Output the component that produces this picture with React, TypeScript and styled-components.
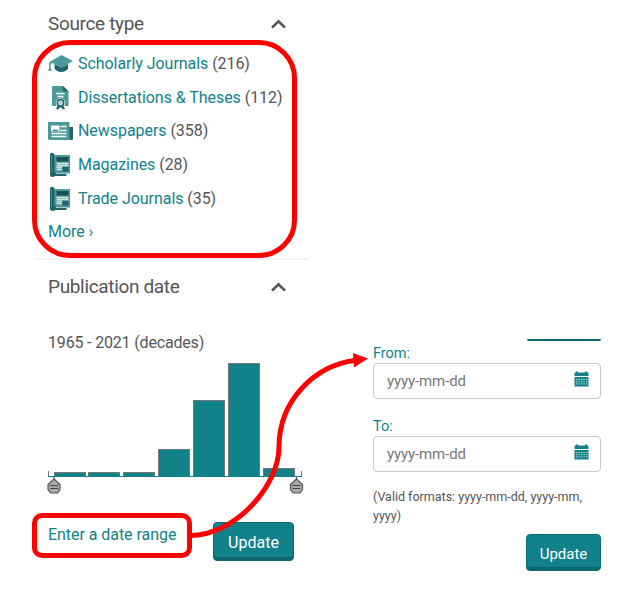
import React from "react";
import styled, { createGlobalStyle } from "styled-components";

const TEAL = "#12828a";

const GlobalStyle = createGlobalStyle`
  * { box-sizing: border-box; }
  body { margin: 0; background: #fff; font-family: Roboto, "Liberation Sans", sans-serif; color: #555; }
`;

const Page = styled.main`
  position: relative;
  display: flex;
  gap: 64px;
  width: 632px;
  height: 594px;
  padding-left: 34px;
  overflow: hidden;
`;
const Facets = styled.aside`
  width: 275px;
`;
const Section = styled.section<{ $divided?: boolean }>`
  padding: 0 0 0 14px;
  height: ${(p) => (p.$divided ? 260 : 334)}px;
  border-bottom: ${(p) => (p.$divided ? "2px solid #f3f3f3" : "0")};
`;
const SectionHeader = styled.header<{ $height: number }>`
  display: flex;
  align-items: center;
  justify-content: space-between;
  height: ${(p) => p.$height}px;
  padding-right: 22px;
`;
const Title = styled.h2`
  margin: 0;
  font-size: 19px;
  line-height: 24px;
  font-weight: 400;
  letter-spacing: -0.34px;
`;
const SourceList = styled.ul`
  list-style: none;
  margin: 0;
  padding: 0;
`;
const SourceItem = styled.li`
  display: grid;
  grid-template-columns: 30px 1fr;
  align-items: center;
  height: 33.7px;
  font-size: 16px;
  letter-spacing: -0.07px;
  white-space: nowrap;
`;
const IconBox = styled.span`
  display: flex;
  align-items: center;
  svg { display: block; }
`;
const Link = styled.a`
  color: ${TEAL};
  font-size: 16px;
  line-height: 20px;
  letter-spacing: -0.05px;
`;
const More = styled.div`
  height: 33px;
  display: flex;
  align-items: center;
`;
const RangeLabel = styled.div`
  height: 22px;
  margin-top: 18px;
  font-size: 16px;
  line-height: 22px;
  letter-spacing: -0.17px;
`;
const Chart = styled.div`
  height: 144px;
  margin-left: -2px;
  margin-top: 8px;
  svg { display: block; }
`;
const Actions = styled.div`
  display: flex;
  justify-content: space-between;
  align-items: flex-start;
  padding-right: 15px;
  margin-top: 16px;
`;
const LinkSlot = styled.div`
  padding-top: 3px;
`;
const Button = styled.button<{ $w: number; $h: number; $size: number }>`
  width: ${(p) => p.$w}px;
  height: ${(p) => p.$h}px;
  padding: 2px 0 0;
  border: 1px solid #0b6b72;
  border-radius: 4px;
  box-shadow: inset 0 -3px 0 #0c666d;
  background: ${TEAL};
  color: #fff;
  font-family: inherit;
  font-size: ${(p) => p.$size}px;
`;
const DateForm = styled.form`
  width: 228px;
  padding-top: 339px;
  display: flex;
  flex-direction: column;
`;
const ButtonEdge = styled.div`
  align-self: flex-end;
  width: 74px;
  height: 2px;
  border-radius: 0 0 4px 4px;
  background: #0c666d;
`;
const Field = styled.div<{ $top: number }>`
  display: flex;
  flex-direction: column;
  margin-top: ${(p) => p.$top}px;
`;
const Label = styled.label`
  color: ${TEAL};
  font-size: 14.5px;
  line-height: 19px;
`;
const InputBox = styled.div`
  display: flex;
  align-items: center;
  justify-content: space-between;
  height: 36px;
  padding: 0 11px 0 13px;
  border: 1px solid #c8c8c8;
  border-radius: 4px;
  color: #777;
  font-size: 15px;
  letter-spacing: -0.1px;
  svg { display: block; margin-top: -4px; }
`;
const Note = styled.p`
  margin: 15px 0 9px;
  font-size: 12.5px;
  line-height: 19px;
`;
const FormFooter = styled.div`
  display: flex;
  justify-content: flex-end;
`;
const Highlight = styled.div<{ $x: number; $y: number; $w: number; $h: number; $r: number }>`
  position: absolute;
  left: ${(p) => p.$x}px;
  top: ${(p) => p.$y}px;
  width: ${(p) => p.$w}px;
  height: ${(p) => p.$h}px;
  border: 5px solid #f00;
  border-radius: ${(p) => p.$r}px;
  pointer-events: none;
`;
const Connector = styled.svg`
  position: absolute;
  inset: 0;
  pointer-events: none;
`;

const Chevron = () => (
  <svg width="17" height="10" viewBox="0 0 17 10">
    <path d="M2 8.6 8.5 2.200 15 8.600" fill="none" stroke="#555" strokeWidth="2.6" />
  </svg>
);

const CapIcon = () => (
  <svg width="26" height="20" viewBox="0 0 26 20">
    <path d="M6.5 9v5.500c2.500 4.600 11 4.600 13.500 0V9z" fill="#21636a" />
    <path d="M0 16.800 1.200 14.500V8.200L13.500 1l11.500 6-11.500 6L5 9.200 2.700 9.500v5l1.500 2.300z" fill="#4b9a99" />
    <path d="m6 9.500 7.500 4L21 9.500" fill="none" stroke="#86b9b8" strokeWidth=".7" />
  </svg>
);

const DiplomaIcon = () => (
  <svg width="26" height="26" viewBox="0 0 26 26">
    <path d="M4 1h11l5.500 5.500V21H4z" fill="#4b9a99" />
    <path d="M15 1v5.500h5.500z" fill="#21636a" />
    <path d="M8 8.500h8.500M9.500 11.500h6" stroke="#fff" strokeWidth="1.300" />
    <circle cx="12.500" cy="18" r="4.800" fill="#fff" />
    <path d="m10 20-2 4 2 .5 2.500-2.500 2.500 2.500 2-.5-2-4z" fill="#21636a" />
    <circle cx="12.500" cy="17.800" r="3.300" fill="#b9d5d3" stroke="#21636a" strokeWidth="1.500" />
  </svg>
);

const NewsIcon = () => (
  <svg width="26" height="20" viewBox="0 0 26 20">
    <path d="M21 6h4v11.500q0 1.500-1.500 1.500H20z" fill="#21636a" />
    <path d="M0 1h21.500v16l1 2H1.500Q0 19 0 17.500z" fill="#4b9a99" />
    <path d="M3 4.500h8.500v6H3z" fill="#fff" />
    <path d="M4.500 8.500h5.500v2H4.500z" fill="#4b9a99" />
    <path d="M12.500 5.500h6M12.500 9.500h6M3.500 12.500h15M3.500 15.500h15" stroke="#fff" strokeWidth="1.400" />
  </svg>
);

const MagazineIcon = () => (
  <svg width="26" height="26" viewBox="0 0 26 26">
    <path d="M6 3h16v18.500H6z" fill="#4b9a99" />
    <path d="M2 2.500Q2 .8 4 .8T6.500 2.500v18H8v2.500Q7 25 4.500 25T2 22.500z" fill="#21636a" />
    <path d="M3.500 3v18" stroke="#3f8586" strokeWidth="1" />
    <path d="M6 23h12.500" stroke="#21636a" strokeWidth="2" />
    <path d="M8.500 5h12v4.500h-12z" fill="#164f55" />
    <path d="M8.500 11.500h12M8.500 13.500h12M8.500 15.500h5.500M8.500 17.500h5.500" stroke="#d5e6e4" strokeWidth="1.300" />
    <path d="M14.500 15h6v4.500h-6z" fill="#21636a" />
  </svg>
);

const CalendarIcon = () => (
  <svg width="15" height="16" viewBox="0 0 15 16">
    <path d="M.5 1.500H2V.5h2v1h7v-1h2v1h1.500v3.500H.5z" fill={TEAL} />
    <path d="M.5 6h14v9.500H.5z" fill={TEAL} />
    <path d="M2 8.500h11.500M2 10.700h11.500M2 12.900h11.500" stroke="#cde5e5" strokeWidth="1" strokeDasharray="1.300 1.200" />
  </svg>
);

const barHeights = [4, 4, 4, 27, 76, 113, 8];

const Handle = ({ x }: { x: number }) => (
  <g transform={`translate(${x} 114)`}>
    <path d="M7 1v2L1 8.500v5L3.500 17h7L13 13.500v-5L7 3" fill="#a9a9a9" stroke="#555" strokeWidth="1.200" />
    <path d="M3 9.500h8M3 12.500h8" stroke="#444" strokeWidth="1.200" />
  </g>
);

const Histogram = () => (
  <svg width="259" height="134" viewBox="0 0 259 134">
    {barHeights.map((h, i) => {
      const x = 8 + Math.floor(i * 34.85);
      return (
        <g key={i}>
          <rect x={x} y={114 - h} width="32" height={h} fill="#777" />
          <rect x={x + 1} y={115 - h} width="30" height={h - 1} fill={TEAL} />
        </g>
      );
    })}
    <path d="M2.500 109v5M255.500 109v5" stroke="#777" />
    <path d="M2 114.500h254" stroke={TEAL} />
    <Handle x={1} />
    <Handle x={243.500} />
  </svg>
);

const sources = [
  { name: "Scholarly Journals", count: 216, Icon: CapIcon },
  { name: "Dissertations & Theses", count: 112, Icon: DiplomaIcon },
  { name: "Newspapers", count: 358, Icon: NewsIcon },
  { name: "Magazines", count: 28, Icon: MagazineIcon },
  { name: "Trade Journals", count: 35, Icon: MagazineIcon },
];

const DateField = ({ label, top }: { label: string; top: number }) => (
  <Field $top={top}>
    <Label>{label}</Label>
    <InputBox>
      <span>yyyy-mm-dd</span>
      <CalendarIcon />
    </InputBox>
  </Field>
);

export default function App() {
  return (
    <>
      <GlobalStyle />
      <Page>
        <Facets>
          <Section $divided>
            <SectionHeader $height={47}>
              <Title>Source type</Title>
              <Chevron />
            </SectionHeader>
            <SourceList>
              {sources.map(({ name, count, Icon }) => (
                <SourceItem key={name}>
                  <IconBox><Icon /></IconBox>
                  <span><Link>{name}</Link> ({count})</span>
                </SourceItem>
              ))}
            </SourceList>
            <More><Link>More ›</Link></More>
          </Section>
          <Section>
            <SectionHeader $height={54}>
              <Title>Publication date</Title>
              <Chevron />
            </SectionHeader>
            <RangeLabel>1965 - 2021 (decades)</RangeLabel>
            <Chart><Histogram /></Chart>
            <Actions>
              <LinkSlot><Link>Enter a date range</Link></LinkSlot>
              <Button type="button" $w={81} $h={39} $size={16}>Update</Button>
            </Actions>
          </Section>
        </Facets>
        <DateForm>
          <ButtonEdge />
          <DateField label="From:" top={3} />
          <DateField label="To:" top={18} />
          <Note>(Valid formats: yyyy-mm-dd, yyyy-mm, yyyy)</Note>
          <FormFooter>
            <Button type="button" $w={75} $h={37} $size={15}>Update</Button>
          </FormFooter>
        </DateForm>
        <Highlight $x={32} $y={40} $w={265} $h={218} $r={38} />
        <Highlight $x={32} $y={513} $w={160} $h={45} $r={10} />
        <Connector width="632" height="594" viewBox="0 0 632 594">
          <path d="M190 535.500C236 535.500 279 485 279 447C279 400 315 366 354 360.500" fill="none" stroke="#f00" strokeWidth="5" />
          <path d="M353 353 368 358.500 354 367.500z" fill="#f00" />
        </Connector>
      </Page>
    </>
  );
}
